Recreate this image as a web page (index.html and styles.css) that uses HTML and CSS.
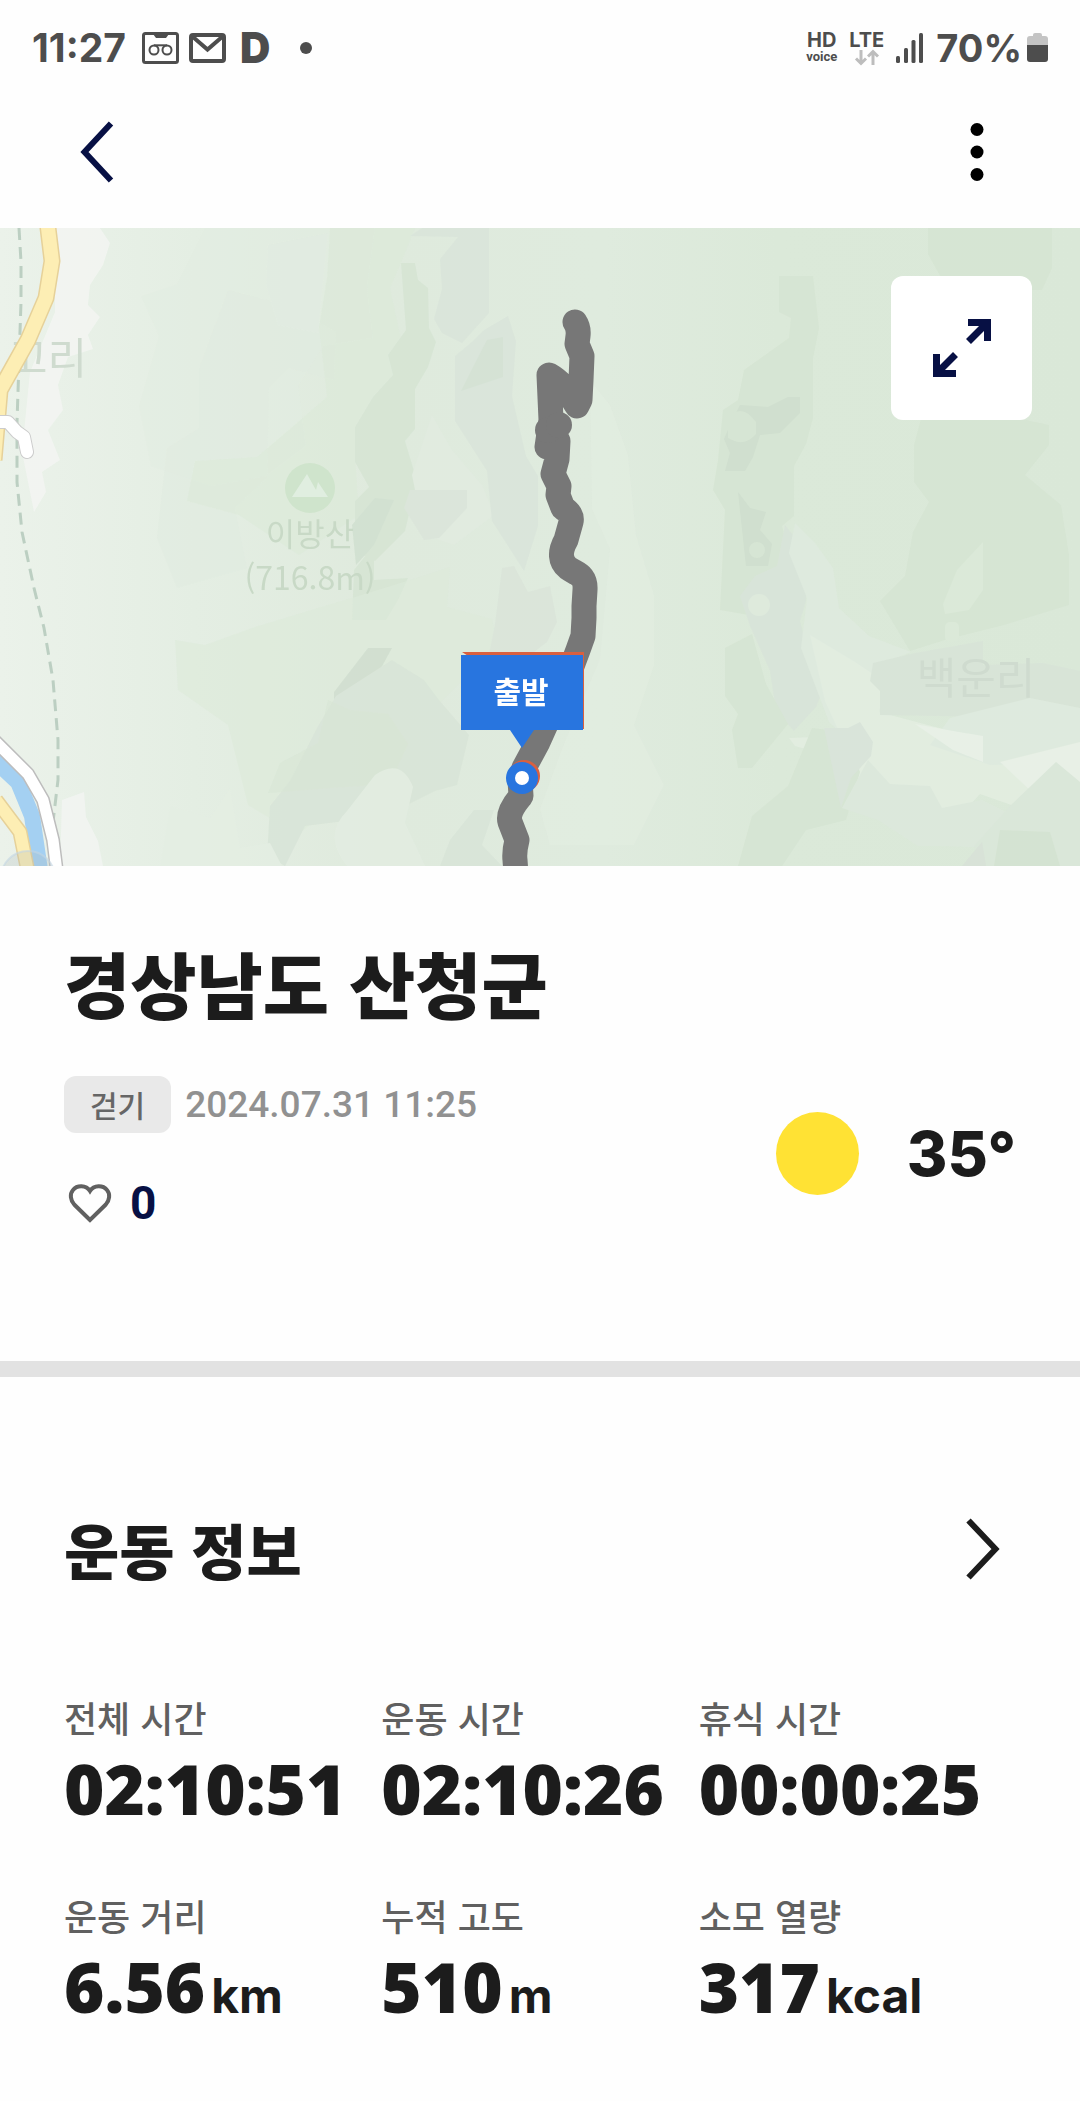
FILE: index.html
```html
<!DOCTYPE html>
<html lang="ko">
<head>
  <meta charset="UTF-8">
  <title>경상남도 산청군</title>
  <meta name="viewport" content="width=device-width, initial-scale=1.0">
  <link rel="stylesheet" href="styles.css">
</head>
<body>
  <div class="status-bar">
    <div class="status-left">
      <span class="clock">11:27</span>
      <svg class="icon-tape" width="38" height="32" viewBox="0 0 38 32" fill="none" stroke="#4d4d4d">
        <rect x="1.5" y="1.5" width="34" height="29" rx="2" stroke-width="3"/>
        <path d="M11 2h16l-3 4H14z" fill="#4d4d4d" stroke="none"/>
        <circle cx="12" cy="18" r="4.5" stroke-width="2"/>
        <circle cx="25" cy="18" r="4.5" stroke-width="2"/>
        <path d="M12 13.300h13" stroke-width="2"/>
      </svg>
      <svg class="icon-mail" width="37" height="30" viewBox="0 0 37 30" fill="none" stroke="#4d4d4d" stroke-width="4">
        <rect x="2" y="2" width="33" height="26" rx="2"/>
        <path d="M4 4l14.500 12.500L33 4"/>
      </svg>
      <span class="app-letter">D</span>
      <span class="more-dot"></span>
    </div>
    <div class="status-right">
      <div class="hd"><b>HD</b><span>voice</span></div>
      <div class="lte">
        <b>LTE</b>
        <svg width="26" height="17" viewBox="0 0 26 17" fill="none" stroke="#bdbdbd" stroke-width="3">
          <path d="M7 1v13M2 9.500l5 5 5-5M19 16V3M14 7.500l5-5 5 5"/>
        </svg>
      </div>
      <svg width="28" height="30" viewBox="0 0 28 30" fill="#4d4d4d">
        <rect x="0" y="23" width="4" height="7" rx="1.500"/>
        <rect x="8" y="15" width="4" height="15" rx="1.500"/>
        <rect x="15.500" y="7" width="4" height="23" rx="1.500"/>
        <rect x="23" y="0" width="4" height="30" rx="1.500"/>
      </svg>
      <div class="battery">
        <span class="percent">70%</span>
        <svg width="21" height="30" viewBox="0 0 21 30">
          <path d="M6 2q0-2 2-2h5q2 0 2 2v1h3q3 0 3 3v7H0V6q0-3 3-3h3z" fill="#c4c4c4"/>
          <path d="M0 12h21v14q0 3-3 3H3q-3 0-3-3z" fill="#4d4d4d"/>
        </svg>
      </div>
    </div>
  </div>

  <header class="nav">
    <button class="icon-btn" aria-label="뒤로">
      <svg width="34" height="62" viewBox="0 0 34 62" fill="none" stroke="#071044" stroke-width="6">
        <path d="M31 2.500L4.500 31 31 59.500"/>
      </svg>
    </button>
    <button class="icon-btn" aria-label="더보기">
      <svg width="14" height="60" viewBox="0 0 14 60">
        <circle cx="7" cy="7.500" r="6.500"/>
        <circle cx="7" cy="30" r="6.500"/>
        <circle cx="7" cy="52.500" r="6.500"/>
      </svg>
    </button>
  </header>

  <main>
    <div class="map">
      <svg class="map-canvas" viewBox="0 228 1080 638" preserveAspectRatio="xMidYMid slice">
        <defs>
          <linearGradient id="land" x1="0" x2="1" y1="0" y2="0">
            <stop offset="0" stop-color="#ebf2ea"/>
            <stop offset="0.180" stop-color="#e4eee3"/>
            <stop offset="0.350" stop-color="#dfeadd"/>
            <stop offset="0.560" stop-color="#dfebde"/>
            <stop offset="0.720" stop-color="#dbe9d9"/>
            <stop offset="1" stop-color="#dae8d8"/>
          </linearGradient>
        </defs>
        <rect y="228" width="1080" height="638" fill="url(#land)"/>

        <!-- terrain, left side -->
        <g class="terrain">
          <path fill="#f4f6f3" d="M55 228h45l10 15-7 22-13 20-2 20 12 12-12 18 5 14-25 8-10 28 5 25-15 20 12 30-18 12 4 20-12 20-12-60 8-80 25-60z"/>
          <path fill="#f3f5f3" d="M62 800l22-8 2 25 12 24 5 25H60z"/>
          <path fill="#e2ede1" d="M205 228h170l-8 60 6 50-50 8-25 40 8 60-40 30-55 10-60-20-12-60 20-70-18-40 36-12z" opacity="0.600"/>
          <path fill="#dfeadf" d="M228 290l55 14 53 28-2 48-45-12-20 20-2 90-32 30 12 60-70 20-20-50 10-90 32-20 0-60z" opacity="0.600"/>
          <path fill="#e2ece2" d="M268 245l60-12-10 100-40-8-12-40z"/>
          <path fill="#dbe9d9" d="M330 228h85l-10 25-15 35 15 70-18 40-32 55 4 62-60 40-60-40-52-14 8-40 62-4 70-60-8-70 8-50z" opacity="0.700"/>
          <path fill="#d5e4d3" d="M401 263h14l3 17 10 8 1 40 7 14-8 25-13 22 0 40-10 12 12 40-12 50-30 30-20-10v-50l14-14-14-25v-35l18-30 20-22-5-20 18-25z"/>
          <path fill="#e1ebe0" d="M432 415l20 35 30 35 12 30-40 30-30-10-12-60z"/>
          <path fill="#d9e4da" d="M422 228h67v85l-27 30-20-10-8-14 8-30-2-30 18-22-48-1z"/>
          <path fill="#d9e4da" d="M484 330l24-14 8 25-4 55 14 60 12 20v50l-14 45-32-50-5-50-32-50v-65l18-15z"/>
          <path fill="#d2e0d3" d="M487 340l16-3v40l-42 14 10-20z"/>
          <path fill="#dae4da" d="M410 490h57v18l-28 30-15 2-20-32z"/>
          <path fill="#cfdfcf" d="M375 498l19 2-20 45-18 20-4-40z"/>
          <path fill="#d5e4d3" d="M354 570l20-25v35l34-2-10 22-12 20h-34z"/>
          <path fill="#dbe9d9" d="M175 640l30 5 50-18 100-30 65-20 30-10-3 40 45 12 6 28-20 18-40 40-60 60-80 70-50-30-20-80-50-35z" opacity="0.650"/>
          <path fill="#cfddce" d="M368 648h24l-30 55-14 11h-14v-22z"/>
          <path fill="#d8e4d7" d="M392 660l32 20 15 20 30 35-12 50-22 6-50 25-80 10-20 40-18-10 3-50 20-25 28-55 18-30z"/>
          <path fill="#d5e4d3" d="M328 700l22 10 38 4 20 30-18 40-60 4-62 5 12-30 38-20z" opacity="0.700"/>
          <path fill="#e3ede2" d="M375 775q26-18 38 12l-8 36 20 43h-78q-25-30 0-55z"/>
          <path fill="#e4eee3" d="M160 866l10-60 40 12 20-30 10 60 30-5 12 23z"/>
          <path fill="#dae4d9" d="M502 568l12-2 14 26 22-6 7 36-10 20-26 20-32-8 6-30z"/>
          <path fill="#d8e4d8" d="M450 840l24-30 20 0-12 35 20 21h-62z"/>
        </g>

        <!-- terrain, middle and right side -->
        <g class="terrain">
          <path fill="#e4eee2" d="M590 380l20 25 18 50 8 80 18 60v70l-20 60 30 60-30 60h-84l-10-36 22-60 38-90 10-110-18-40z" opacity="0.600"/>
          <path fill="#d5e4d2" d="M779 276h34l6 52-6 30v60l-7 26-12 22v50l-12 10 8 30-20 40-15 20-35-6 5-100-12-20 5-30 5-50 15-10 6-30 45-32 2-20-12-6z"/>
          <path fill="#cddccc" d="M740 405l28 2 20-10h12v16l-20 20-20 2-7 22-8 14h-20l5-18-6-14 8-18z"/>
          <path fill="#d5e4d2" d="M728 418q14-16 28 4v12q-12 14-28 4z"/>
          <path fill="#cddccc" d="M738 492l12 16 16 4-6 18 12 14-4 22h-22z"/>
          <circle cx="757" cy="550" r="8" fill="#d5e4d2"/>
          <path fill="#d8e3d9" d="M785 525l21 26v50l-6 20 8 32 18 30-10 24-22 24-18-20-6-40-20-45-10-30 15-20 22-10z"/>
          <path fill="#dfeadf" d="M795 523l20 20 18 25 6 40 30 28 42 16-30 12-8 30 22 28-34 30-32-30-28-74 6-50-18-45z"/>
          <path fill="#e4eee2" d="M810 635l45 27 30 20-6 30 60 16 80 26 61 8v58l-60-12-40-14-48 52-60-54-42-36-35-10-6-8 52-2-16-35z"/>
          <circle cx="759" cy="605" r="11" fill="#dfeadd"/>
          <path fill="#d5e4d2" d="M725 648l27-14 14 50 22 40-36 44h-14l-6-38 6-16-13-18z"/>
          <path fill="#d5e4d2" d="M812 728l32 4 16 40-14 48-40 10-24 36h-44l14-50 36-30z"/>
          <path fill="#d9e3da" d="M824 728h24l12-6 13 20-2 14-20 22-10 30z"/>
          <path fill="#dde8dd" d="M842 808l26-48 22 24 40 2 12 22 40-8 36 18 0 30-80-2-20 0-40-26z"/>
          <path fill="#d5e4d2" d="M928 228h124v40l-10 22-34 0h-60l-20-36z"/>
          <path fill="#d5e4d2" d="M914 445l7-26h100l28 6 0 20-24 30 36 30 8 50 0 50-65 20-56 14-38 12-30-50 25-25 8-44 16-30-15-20z"/>
          <path fill="#dbe9d9" d="M983 542v48l-14 20-24 4-2-10 14-34z"/>
          <rect x="945" y="622" width="14" height="20" rx="5" fill="#dbe9d9"/>
          <path fill="#d8e3d8" d="M873 663l42-10 68-12v24l60-2 37 8v50l-90-4-110-2v-24l-10-10z"/>
          <path fill="#dfeae0" d="M950 718l80-20 50 10v55l-90 2-60-20z"/>
          <path fill="#ebf2ea" d="M915 724l44 8 24 4v26l-30-12z"/>
          <path fill="#ebf2ea" d="M1000 762l80-20v40l-44 14z"/>
          <path fill="#dae6da" d="M1056 762l24 20v84h-96l-10-20 36-40z"/>
          <path fill="#d3e2d1" d="M1000 830l50 2 10 34h-66z"/>
          <path fill="#d7e0d7" d="M962 866l20-24 4 24z"/>
        </g>

        <!-- place names and peak -->
        <g class="map-labels">
          <text class="village" x="8" y="374">고리</text>
          <circle cx="310" cy="488" r="25" fill="#cfe4cc"/>
          <path d="M292 497l15-23 9 16 2-8 10 15z" fill="#e0eee0"/>
          <text class="peak" x="310" y="546" text-anchor="middle">이방산</text>
          <text class="peak" x="310" y="590" text-anchor="middle">(716.8m)</text>
          <text class="village" x="976" y="694" text-anchor="middle">백운리</text>
        </g>

        <!-- roads and river -->
        <path d="M19 228l2 34v40l-2 60-2 60v60l5 50 12 56 10 40 9 52 5 60v40l-5 42" fill="none" stroke="#bccfc2" stroke-width="3" stroke-dasharray="12 7"/>
        <g fill="none" stroke-linejoin="round">
          <path d="M48 218v10l4 33-6 37-18 42-28 50-6 70" stroke="#e6d199" stroke-width="17"/>
          <path d="M48 218v10l4 33-6 37-18 42-28 50-6 70" stroke="#fdeeb4" stroke-width="14"/>
          <path d="M0 422h8l9 10 7 5 3 15" stroke="#cccccc" stroke-width="14" stroke-linecap="round"/>
          <path d="M0 422h8l9 10 7 5 3 15" stroke="#ffffff" stroke-width="12" stroke-linecap="round"/>
          <path d="M-8 758l26 24 14 34 8 54" stroke="#a4d0f2" stroke-width="16"/>
          <path d="M-4 800l24 32 8 40" stroke="#e6d199" stroke-width="15"/>
          <path d="M-4 800l24 32 8 40" stroke="#fdeeb4" stroke-width="12"/>
          <path d="M-6 740l34 34 15 26 10 40 4 32" stroke="#bdbdbd" stroke-width="14"/>
          <path d="M-6 740l34 34 15 26 10 40 4 32" stroke="#ffffff" stroke-width="11"/>
        </g>
        <circle cx="28" cy="878" r="27" fill="#aab9bb" fill-opacity="0.250" stroke="#c3d6e2" stroke-opacity="0.600" stroke-width="2"/>

        <!-- walked track -->
        <path class="track" d="M575 322q4 6 3 14l-1 8 5 12-1 24-1 20-3 6q-12-22-28-31l2 45-3 20-1 7 11-6-1 18-4 15 6 12-1 9 5 13q10 6 8 14l-5 18q-10 18 2 28c8 6 18 6 17 22l-1 16v12l-1 18-5 14-6 16-34 76-14 26-4 12 1 16q-14 16-11 26l7 18q-3 12-2 20l1 14"/>
        <circle cx="548" cy="430" r="13" fill="#777777"/>
        <circle cx="559" cy="425" r="13" fill="#777777"/>

        <!-- start marker -->
        <path d="M462 652h122v77h-4z" fill="#d9603f"/>
        <path d="M461 655h122v75h-49l-12 18-12-18h-49z" fill="#2875df"/>
        <text class="marker-text" x="521" y="703" text-anchor="middle">출발</text>
        <circle cx="524" cy="776" r="16" fill="#d9603f"/>
        <circle cx="522" cy="778" r="16" fill="#2875df"/>
        <circle cx="522" cy="778" r="7" fill="#ffffff"/>
      </svg>
      <button class="expand" aria-label="지도 크게 보기">
        <svg width="58" height="58" viewBox="0 0 58 58" fill="none" stroke="#071044" stroke-width="7">
          <path d="M35 3.500h19.500V22M53 5L35.500 22.500M3.500 35v19.500H23M5 53l17.500-17.500"/>
        </svg>
      </button>
    </div>

    <section class="summary">
      <h1>경상남도 산청군</h1>
      <div class="summary-row">
        <div class="meta">
          <p class="when"><span class="chip">걷기</span><time datetime="2024-07-31T11:25">2024.07.31 11:25</time></p>
          <button class="like">
            <svg width="44" height="40" viewBox="0 0 44 40" fill="none" stroke="#606060" stroke-width="4">
              <path d="M22 37L6.200 21.500C2.500 17.500 1.500 11 5 7c4-5 13-5.200 17 1 4-6.200 13-6 17-1 3.500 4 2.500 10.500-1.200 14.500z"/>
            </svg>
            <span>0</span>
          </button>
        </div>
        <div class="weather">
          <span class="sun"></span>
          <span class="temp">35°</span>
        </div>
      </div>
    </section>

    <section class="info">
      <div class="info-head">
        <h2>운동 정보</h2>
        <button class="icon-btn" aria-label="운동 정보 자세히">
          <svg width="34" height="62" viewBox="0 0 34 62" fill="none" stroke="#1c1c1c" stroke-width="6">
            <path d="M2.500 2.500L29.500 31l-27 28.500"/>
          </svg>
        </button>
      </div>
      <dl class="stats">
        <div><dt>전체 시간</dt><dd>02:10:51</dd></div>
        <div><dt>운동 시간</dt><dd>02:10:26</dd></div>
        <div><dt>휴식 시간</dt><dd>00:00:25</dd></div>
        <div><dt>운동 거리</dt><dd>6.56<small>km</small></dd></div>
        <div><dt>누적 고도</dt><dd>510<small>m</small></dd></div>
        <div><dt>소모 열량</dt><dd>317<small>kcal</small></dd></div>
      </dl>
    </section>
  </main>
</body>
</html>
```
FILE: styles.css
```css
* { margin: 0; padding: 0; box-sizing: border-box; }
body {
  background: #fefefe;
  font-family: Inter, 'Noto Sans CJK KR', sans-serif;
  color: #1c1c1c;
}
button {
  background: none;
  border: none;
  font: inherit;
  color: inherit;
  cursor: pointer;
}
svg { display: block; }

/* status bar */
.status-bar {
  display: flex;
  justify-content: space-between;
  height: 75px;
  padding: 21px 32px 0;
  color: #4d4d4d;
}
.status-left, .status-right {
  display: flex;
  align-items: center;
  height: 54px;
}
.clock, .percent {
  font-size: 39px;
  font-weight: 700;
  line-height: 54px;
}
.percent { font-size: 38px; }
.icon-tape { margin-left: 16px; }
.icon-mail { margin-left: 9px; }
.app-letter {
  margin-left: 14px;
  font-size: 42px;
  font-weight: 900;
  line-height: 54px;
}
.more-dot {
  width: 12px;
  height: 12px;
  margin-left: 30px;
  border-radius: 50%;
  background: #4d4d4d;
}
.status-right { gap: 12px; }
.hd, .lte {
  display: flex;
  flex-direction: column;
  align-items: center;
}
.hd b, .lte b {
  font-size: 20px;
  line-height: 18px;
}
.hd span {
  font-family: Roboto, sans-serif;
  font-size: 13px;
  font-weight: 700;
  line-height: 16px;
}
.battery {
  display: flex;
  align-items: center;
  gap: 5px;
}

.nav {
  display: flex;
  align-items: center;
  justify-content: space-between;
  height: 153px;
  padding: 0 80px;
}
.nav .icon-btn { padding: 0 16px 0 0; }

/* map */
.map { position: relative; }
.map-canvas {
  width: 100%;
  aspect-ratio: 1080 / 638;
}
.terrain { opacity: 0.8; }
.map-labels {
  font-family: 'Noto Sans CJK KR', sans-serif;
}
.village {
  font-size: 43px;
  fill: #cfdbcf;
}
.peak {
  font-size: 32px;
  fill: #c8d9c6;
}
.track {
  fill: none;
  stroke: #777777;
  stroke-width: 25;
  stroke-linecap: round;
  stroke-linejoin: round;
}
.marker-text {
  font-family: 'Noto Sans CJK KR', sans-serif;
  font-size: 30px;
  font-weight: 700;
  fill: #ffffff;
}
.expand {
  position: absolute;
  top: 48px;
  right: 48px;
  display: flex;
  align-items: center;
  justify-content: center;
  width: 141px;
  height: 144px;
  border-radius: 12px;
  background: #ffffff;
}

/* title, date, weather */
.summary {
  padding: 68px 64px 130px;
  border-bottom: 16px solid #e2e2e2;
}
h1, h2, dt, .chip { font-family: 'Noto Sans CJK KR', sans-serif; }
h1 {
  font-size: 72px;
  font-weight: 900;
  line-height: 96px;
}
.summary-row {
  display: flex;
  align-items: center;
  justify-content: space-between;
  margin-top: 46px;
}
.when {
  display: flex;
  align-items: center;
  gap: 14px;
}
.chip {
  padding: 0 26px;
  border-radius: 12px;
  background: #e9e9e9;
  color: #666666;
  font-size: 30px;
  font-weight: 500;
  line-height: 57px;
}
time {
  font-family: Roboto, sans-serif;
  font-size: 37px;
  font-weight: 500;
  color: #919191;
}
.like {
  display: flex;
  align-items: center;
  gap: 18px;
  margin-top: 42px;
  padding-left: 4px;
  color: #071044;
  font-family: Roboto, sans-serif;
  font-size: 46px;
  font-weight: 700;
  line-height: 56px;
}
.weather {
  display: flex;
  align-items: center;
  gap: 48px;
}
.sun {
  width: 83px;
  height: 83px;
  border-radius: 50%;
  background: #ffe234;
}
.temp {
  font-size: 62px;
  font-weight: 800;
}

/* exercise info */
.info { padding: 128px 64px 64px; }
.info-head {
  display: flex;
  align-items: center;
  justify-content: space-between;
}
.info-head .icon-btn { padding-right: 16px; }
h2 {
  font-size: 60px;
  font-weight: 900;
  line-height: 88px;
}
.stats {
  display: grid;
  grid-template-columns: repeat(3, 1fr);
  row-gap: 60px;
  margin-top: 100px;
}
dt {
  color: #606060;
  font-size: 36px;
  font-weight: 500;
  line-height: 48px;
}
dd {
  margin-top: 4px;
  font-family: 'Noto Sans', sans-serif;
  font-size: 69px;
  font-weight: 900;
  line-height: 86px;
  white-space: nowrap;
}
dd small {
  margin-left: 6px;
  font-family: Inter, sans-serif;
  font-size: 48px;
  font-weight: 700;
}
```
